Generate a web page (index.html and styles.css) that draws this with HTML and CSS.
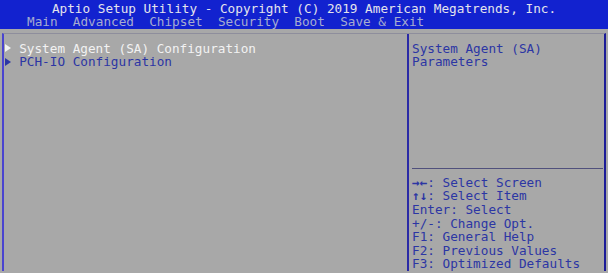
FILE: index.html
```html
<!DOCTYPE html>
<html lang="en">
<head>
    <meta charset="UTF-8">
    <meta name="viewport" content="width=device-width, initial-scale=1.0">
    <title>Aptio Setup Utility</title>
    <link rel="stylesheet" href="styles.css">
</head>
<body>
<header>
    <div class="title">Aptio Setup Utility - Copyright (C) 2019 American Megatrends, Inc.</div>
    <nav class="menu">
        <span>Main</span>
        <span>Advanced</span>
        <span>Chipset</span>
        <span>Security</span>
        <span>Boot</span>
        <span>Save &amp; Exit</span>
    </nav>
</header>
<div class="frame">
    <div class="items">
        <div class="item selected"><svg class="arrow" viewBox="0 0 6 8"><path d="M0 0 L6 4 L0 8 Z"/></svg>System Agent (SA) Configuration</div>
        <div class="item"><svg class="arrow" viewBox="0 0 6 8"><path d="M0 0 L6 4 L0 8 Z"/></svg>PCH-IO Configuration</div>
    </div>
    <div class="side">
        <div class="desc">
            <p>System Agent (SA)</p>
            <p>Parameters</p>
        </div>
        <div class="help">
            <p><b>&rarr;&larr;</b>: Select Screen</p>
            <p><b>&uarr;&darr;</b>: Select Item</p>
            <p>Enter: Select</p>
            <p>+/-: Change Opt.</p>
            <p>F1: General Help</p>
            <p>F2: Previous Values</p>
            <p>F3: Optimized Defaults</p>
        </div>
    </div>
</div>
<footer>Version 2.20.1275. Copyright (C) 2019 American Megatrends, Inc.</footer>
</body>
</html>
```

FILE: styles.css
```css
body {
    font-family: "DejaVu Sans Mono", "Liberation Mono", monospace;
    font-size: 12.7px;
    line-height: 13.6px;
    background-color: #a8a8a8;
    color: #2c36a4;
    margin: 0;
    padding: 0;
    width: 608px;
    height: 273px;
    overflow: hidden;
}
p {
    margin: 0;
    white-space: pre;
}
b {
    font-weight: bold;
}
header {
    background: #1222cf;
    height: 29px;
    padding-top: 1.5px;
    box-sizing: border-box;
}
.title {
    color: #e4e4ec;
    text-align: center;
    white-space: pre;
}
.menu {
    display: flex;
    gap: 2ch;
    padding-left: 27px;
    color: #a6acd0;
    white-space: pre;
}
.frame {
    display: flex;
    margin: 4px 2px 0 2px;
    height: 238px;
    border-top: 1px solid #8e8e9c;
    border-left: 2px solid #4a44d0;
    border-right: 2px solid #1c1c98;
    box-sizing: border-box;
    overflow: hidden;
}
.items {
    width: 403px;
    padding-top: 7.5px;
    border-right: 2px solid #2a2aa6;
}
.item {
    display: flex;
    align-items: center;
    white-space: pre;
}
.arrow {
    width: 6px;
    height: 8px;
    margin: 0 8.2px 0 1px;
    fill: #2c36a4;
}
.selected {
    color: #f2f2f2;
}
.selected .arrow {
    fill: #f2f2f2;
}
.side {
    flex: 1;
    display: flex;
    flex-direction: column;
    padding-left: 3px;
}
.desc {
    height: 135px;
    padding-top: 7.5px;
}
.help {
    border-top: 1px solid #50507c;
    margin-right: 1px;
    padding-top: 7px;
}
footer {
    color: #ececec;
    text-align: center;
    white-space: pre;
}
```
